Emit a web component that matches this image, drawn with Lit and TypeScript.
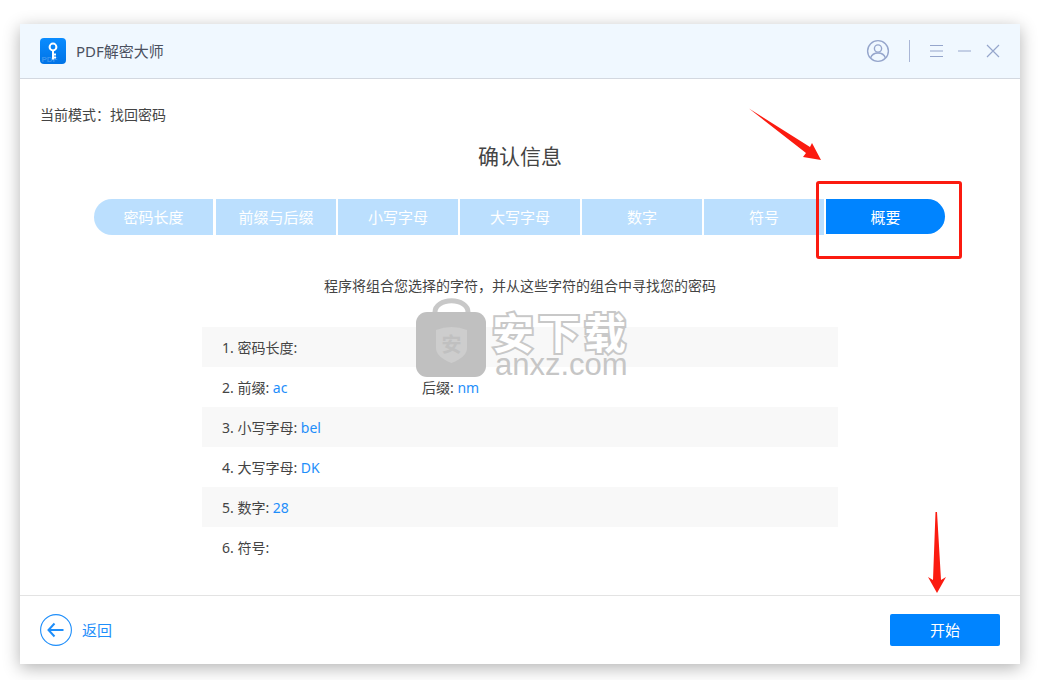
import { LitElement, html, css, svg } from "lit";
import { customElement } from "lit/decorators.js";

const steps = ["密码长度", "前缀与后缀", "小写字母", "大写字母", "数字", "符号", "概要"];

@customElement("app-root")
export class AppRoot extends LitElement {
  static styles = css`
    :host {
      display: block;
      position: relative;
      width: 1048px;
      height: 680px;
      overflow: hidden;
      background: #fff;
      font-family: "Noto Sans", "Noto Sans CJK SC", sans-serif;
      font-size: 14px;
      color: #444;
    }
    .page { padding: 24px 28px 16px 20px; height: 680px; box-sizing: border-box; }
    .window {
      height: 640px;
      display: flex;
      flex-direction: column;
      background: #fff;
      box-shadow: 0 4px 16px rgba(0, 0, 0, 0.3);
    }
    .head {
      height: 54px;
      flex: none;
      background: #f0f8ff;
      border-bottom: 1px solid #d3d8e0;
      display: flex;
      align-items: center;
      padding: 0 20px;
    }
    .logo { width: 26px; height: 26px; margin-right: 10px; flex: none; }
    .logo text { font-family: "Liberation Sans", sans-serif; font-size: 8px; font-weight: 700; fill: rgba(255, 255, 255, 0.22); }
    .title { font-size: 15px; color: #4a5060; flex: 1; padding-bottom: 2px; }
    .tools { display: flex; align-items: center; margin-right: 0; }
    .tools svg { display: block; }
    .sep { width: 1px; height: 22px; background: #a9b6d6; margin: 0 20px 0 20px; }
    .tools .gap { margin-right: 15px; }
    .user { transform: translateX(1px); }
    .main { flex: 1; display: flex; flex-direction: column; padding: 0 20px; min-height: 0; }
    .mode { margin-top: 26px; line-height: 20px; font-size: 14px; color: #444; }
    h1 {
      margin: 16px 0 0;
      font-size: 21px;
      font-weight: 400;
      line-height: 30px;
      text-align: center;
      color: #444;
    }
    .stepper {
      display: flex;
      gap: 2px;
      margin: 28px 55px 0 54px;
      height: 36px;
      align-items: flex-start;
    }
    .step {
      width: 120px;
      flex: none;
      height: 36px;
      box-sizing: border-box;
      padding-bottom: 2px;
      background: #bbdffe;
      color: #fff;
      display: flex;
      align-items: center;
      justify-content: center;
      font-size: 15px;
    }
    .step.first { width: 119px; margin-right: 1px; border-radius: 18px 0 0 18px; }
    .step.active { width: 119px; background: #0084ff; border-radius: 0 18px 18px 0; height: 35px; padding-bottom: 1px; }
    .note { margin-top: 41px; text-align: center; font-size: 14px; line-height: 20px; color: #444; }
    .rows { margin: 31px 162px 0 162px; }
    .row { height: 40px; display: flex; align-items: center; padding-left: 20px; font-size: 14px; color: #444; }
    .row:nth-child(odd) { background: #f8f8f8; }
    .val { color: #1e8efa; font-size: 14px; }
    .cell { width: 200px; }
    .foot {
      height: 68px;
      flex: none;
      border-top: 1px solid #e3e3e3;
      display: flex;
      align-items: center;
      justify-content: space-between;
      padding: 0 20px;
    }
    .back { display: flex; align-items: center; gap: 10px; color: #1e8efa; font-size: 15px; }
    .back svg { display: block; }
    .back span { padding-bottom: 2px; }
    .start {
      width: 110px;
      height: 32px;
      box-sizing: border-box;
      padding-bottom: 2px;
      border-radius: 2px;
      background: #0084ff;
      color: #fff;
      display: flex;
      align-items: center;
      justify-content: center;
      font-size: 15px;
    }
    .overlay { position: absolute; left: 0; top: 0; pointer-events: none; }
    .redbox {
      position: absolute;
      left: 816px;
      top: 181px;
      width: 146px;
      height: 78px;
      box-sizing: border-box;
      border: 3px solid #fb1b10;
      border-radius: 3px;
    }
    .mark { position: absolute; left: 416px; top: 298px; width: 220px; height: 80px; }
    .mark svg { position: absolute; left: 0; top: 0; }
    .mark svg text { font-size: 20px; font-weight: 700; fill: #c0c0c0; text-anchor: middle; }
    .mark .cn {
      position: absolute;
      left: 76px;
      top: 16px;
      font-size: 42px;
      line-height: 38px;
      letter-spacing: 4px;
      font-weight: 700;
      color: #fff;
      -webkit-text-stroke: 4px #c8c8c8;
      paint-order: stroke;
      white-space: nowrap;
    }
    .mark .en {
      position: absolute;
      left: 79px;
      top: 56px;
      font-size: 31px;
      line-height: 22px;
      font-family: "Liberation Sans", sans-serif;
      color: #c6c6c6;
      white-space: nowrap;
    }
  `;

  render() {
    return html`
      <div class="page">
        <div class="window">
          <div class="head">
            <svg class="logo" viewBox="0 0 26 26">
              <defs>
                <linearGradient id="lg" x1="0" y1="0" x2="0" y2="1">
                  <stop offset="0" stop-color="#0a8cff" />
                  <stop offset="1" stop-color="#0073e6" />
                </linearGradient>
              </defs>
              <rect width="26" height="26" rx="4" fill="url(#lg)" />
              <text x="1.500" y="24">PDF</text>
              <circle cx="13" cy="9" r="3.400" fill="none" stroke="#fff" stroke-width="2" />
              <path d="M13 12.400V21.500M13 16.500h3M13 19.500h3" fill="none" stroke="#fff" stroke-width="2" />
            </svg>
            <div class="title">PDF解密大师</div>
            <div class="tools">
              <svg class="user" width="24" height="24" viewBox="0 0 24 24" fill="none" stroke="#96a6cc" stroke-width="1.400">
                <circle cx="12" cy="12" r="10.400" />
                <circle cx="12" cy="9.500" r="3.600" />
                <path d="M4.600 19c1.200-3.600 4-5 7.400-5s6.200 1.400 7.400 5" />
              </svg>
              <div class="sep"></div>
              <svg class="gap" width="13" height="12" viewBox="0 0 13 12" stroke="#96a6cc" stroke-width="1">
                <path d="M0 .5h13M0 6h13M0 11.500h13" />
              </svg>
              <svg class="gap" width="13" height="12" viewBox="0 0 13 12" stroke="#96a6cc" stroke-width="1">
                <path d="M0 6h13" />
              </svg>
              <svg width="14" height="14" viewBox="0 0 14 14" stroke="#96a6cc" stroke-width="1.200">
                <path d="M1 1l12 12M13 1L1 13" />
              </svg>
            </div>
          </div>
          <div class="main">
            <div class="mode">当前模式：找回密码</div>
            <h1>确认信息</h1>
            <div class="stepper">
              ${steps.map(
                (s, i) =>
                  html`<div class="step ${i === 0 ? "first" : ""} ${i === steps.length - 1 ? "active" : ""}">${s}</div>`
              )}
            </div>
            <div class="note">程序将组合您选择的字符，并从这些字符的组合中寻找您的密码</div>
            <div class="rows">
              <div class="row">1. 密码长度:</div>
              <div class="row"><div class="cell">2. 前缀: <span class="val">ac</span></div><div>后缀: <span class="val">nm</span></div></div>
              <div class="row">3. 小写字母:&nbsp;<span class="val">bel</span></div>
              <div class="row">4. 大写字母:&nbsp;<span class="val">DK</span></div>
              <div class="row">5. 数字:&nbsp;<span class="val">28</span></div>
              <div class="row">6. 符号:</div>
            </div>
          </div>
          <div class="foot">
            <div class="back">
              <svg width="32" height="32" viewBox="0 0 32 32" fill="none" stroke="#1e8efa">
                <circle cx="16" cy="16" r="15.400" stroke-width="1.100" />
                <path d="M8.500 16h15M14.500 9.500L8.500 16l6 6.500" stroke-width="2" />
              </svg>
              <span>返回</span>
            </div>
            <div class="start">开始</div>
          </div>
        </div>
      </div>

      <div class="mark">
        <svg width="72" height="80" viewBox="0 0 72 80">
          <path d="M19 16V14a16 11 0 0 1 33 0v2" fill="none" stroke="#c8c8c8" stroke-width="5" />
          <rect x="0" y="14" width="70" height="65" rx="11" fill="#c0c0c0" />
          <path d="M20 32q15.500-6 31 0v18q0 9-15.500 15Q20 59 20 50z" fill="#cdcdcd" />
          <text x="35.500" y="54">安</text>
        </svg>
        <div class="cn">安下载</div>
        <div class="en">anxz.com</div>
      </div>

      <div class="redbox"></div>
      <svg class="overlay" width="1048" height="680" viewBox="0 0 1048 680">
        ${svg`<path d="M749 108.500L810 147 812 143 821 160 803 157 806 153z" fill="#fb1b10" />
        <path d="M935.500 512h1.500L941 580 946 577 937 593 928 577 933 580z" fill="#fb1b10" />`}
      </svg>
    `;
  }
}
